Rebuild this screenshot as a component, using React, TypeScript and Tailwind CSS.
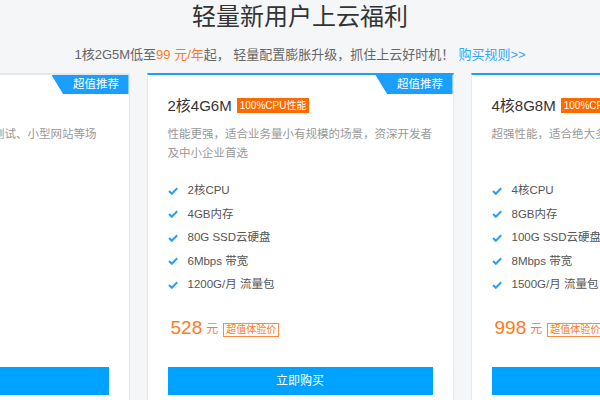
const font = "font-['Liberation_Sans','Noto_Sans_CJK_SC',sans-serif]";

type Plan = {
  name: string;
  lines: string[];
  features: string[];
  price: string;
  highlight: boolean;
};

const plans: Plan[] = [
  {
    name: "1核2G5M",
    lines: ["入门级配置，适用于个人开发测试、小型网站等场", "景"],
    features: ["1核CPU", "2GB内存", "40G SSD云硬盘", "5Mbps 带宽", "1000G/月 流量包"],
    price: "99",
    highlight: false,
  },
  {
    name: "2核4G6M",
    lines: ["性能更强，适合业务量小有规模的场景，资深开发者", "及中小企业首选"],
    features: ["2核CPU", "4GB内存", "80G SSD云硬盘", "6Mbps 带宽", "1200G/月 流量包"],
    price: "528",
    highlight: true,
  },
  {
    name: "4核8G8M",
    lines: ["超强性能，适合绝大多数企业级应用及高并发场景"],
    features: ["4核CPU", "8GB内存", "100G SSD云硬盘", "8Mbps 带宽", "1500G/月 流量包"],
    price: "998",
    highlight: true,
  },
];

function Check() {
  return (
    <svg width="10" height="8" viewBox="0 0 10 8" className="mr-[10px] shrink-0">
      <path d="M1 4 L3.8 6.8 L9.2 1.2" fill="none" stroke="#2a9df4" strokeWidth="2" />
    </svg>
  );
}

function PlanCard({ plan }: { plan: Plan }) {
  return (
    <div
      className={`relative w-[307px] shrink-0 bg-white border border-[#e6e8ec] border-t-2 ${
        plan.highlight ? "border-t-[#1a9fff]" : "border-t-[#e3e8ee]"
      } px-[20px] pt-[20px] pb-6`}
    >
      {/* corner badge */}
      <div className="absolute top-0 right-0 w-[77px] h-[19px] bg-[#1a9fff] [clip-path:polygon(0_0,100%_0,100%_100%,15%_100%)] flex items-center justify-center pl-[12px]">
        <span className="text-white text-[11.5px] leading-none">超值推荐</span>
      </div>

      <div className="flex items-center h-5">
        <span className="text-[15px] text-[#333] leading-none">{plan.name}</span>
        <span className="ml-[5px] bg-[#ff6a00] text-white text-[10px] leading-[15px] px-[3px]">100%CPU性能</span>
      </div>

      <div className="mt-[10px] h-[38px] text-[11.5px] leading-[19px] text-[#999]">
        {plan.lines.map((l) => (
          <div key={l} className="whitespace-nowrap">{l}</div>
        ))}
      </div>

      <div className="mt-[16px] flex flex-col">
        {plan.features.map((f) => (
          <div key={f} className="flex items-center h-[23.5px] text-[11.5px] text-[#555]">
            <Check />
            <span>{f}</span>
          </div>
        ))}
      </div>

      <div className="mt-[21px] flex items-center h-5 pl-[3px]">
        <span className="text-[19px] text-[#ff7a22] leading-none">{plan.price}</span>
        <span className="ml-[4px] text-[12px] text-[#ff7a22] leading-none mt-[3px]">元</span>
        <span className="ml-[5px] mt-[5px] border border-[#ff8a3d] text-[#ff7a22] text-[10px] leading-[12px] px-[2px]">
          超值体验价
        </span>
      </div>

      <button className="mt-[29px] w-full h-[28px] bg-[#00a2ff] text-white text-[12px]">立即购买</button>
    </div>
  );
}

export default function App() {
  return (
    <div className={`w-[600px] h-[400px] overflow-hidden bg-[#f5f6f8] ${font}`}>
      <h1 className="text-center text-[24px] leading-[34px] text-[#333]">轻量新用户上云福利</h1>
      <p className="mt-[11px] text-center text-[13px] leading-[20px] text-[#666]">
        1核2G5M低至<span className="text-[#ff7a22]">99 元/年</span>起， 轻量配置膨胀升级，抓住上云好时机！
        <span className="ml-1 text-[#2ea7ff]">购买规则&gt;&gt;</span>
      </p>
      <div className="mt-[8px] flex justify-center gap-[17px]">
        {plans.map((p) => (
          <PlanCard key={p.name} plan={p} />
        ))}
      </div>
    </div>
  );
}
